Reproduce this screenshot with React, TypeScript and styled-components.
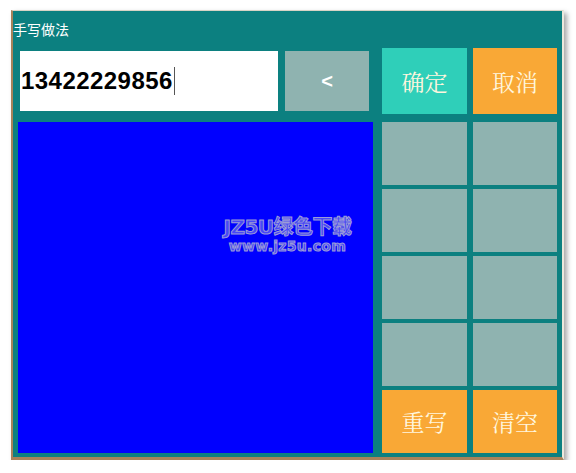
import styled, { createGlobalStyle } from "styled-components";

const GlobalStyle = createGlobalStyle`
  html, body {
    margin: 0;
    padding: 0;
    background: #ffffff;
  }
  body {
    font-family: "Liberation Sans", Arial, "Noto Sans CJK SC", sans-serif;
  }
`;

const SWindow = styled.div`
  margin: 10px 0 0 11px;
  width: 553px;
  box-sizing: border-box;
  background-color: #0c8080;
  border-left: 2px solid #a8825a;
  border-bottom: 3px solid #a8825a;
  border-top: 1px solid #d9d4c6;
  border-right: 2px solid #ece8dc;
  box-shadow: 3px 3px 5px rgba(0, 0, 0, 0.35);
  padding: 0 5px 4px 5px;
`;

const STitle = styled.div`
  height: 37px;
  margin-left: -5px;
  padding-top: 10px;
  box-sizing: border-box;
  color: #ffffff;
  font-family: "Noto Sans CJK SC", sans-serif;
  font-size: 14px;
  line-height: 16px;
`;

const SBody = styled.div`
  display: flex;
  gap: 9px;
`;

const SLeft = styled.div`
  width: 355px;
  display: flex;
  flex-direction: column;
  gap: 8px;
`;

const SInputBar = styled.div`
  height: 66px;
  box-sizing: border-box;
  padding: 3px 4px 3px 2px;
  display: flex;
  gap: 7px;
`;

const SInput = styled.div`
  width: 258px;
  background: #ffffff;
  display: flex;
  align-items: center;
  padding-left: 1px;
  box-sizing: border-box;
  font-family: "Liberation Sans", Arial, sans-serif;
  font-weight: bold;
  font-size: 24px;
  letter-spacing: 0.45px;
  color: #000000;
`;

const SCaret = styled.span`
  display: inline-block;
  width: 1px;
  height: 28px;
  margin-left: 1px;
  background: #555555;
`;

const SKey = styled.button<{ $tone?: "gray" | "green" | "orange" }>`
  border: none;
  margin: 0;
  padding: 0;
  cursor: pointer;
  background-color: ${({ $tone }) =>
    $tone === "green" ? "#2fcfb9" : $tone === "orange" ? "#f9a836" : "#8fb3b0"};
  color: #fff6de;
  font-family: "Noto Serif CJK SC", "Noto Sans CJK SC", serif;
  font-size: 23px;
  display: flex;
  align-items: center;
  justify-content: center;
`;

const SBack = styled(SKey)`
  width: 84px;
  font-family: "Liberation Sans", Arial, sans-serif;
  font-weight: bold;
  font-size: 20px;
  color: #ffffff;
`;

const SCanvas = styled.div`
  position: relative;
  height: 331px;
  background: #0000ff;
`;

const SWatermark = styled.div`
  position: absolute;
  left: 204px;
  top: 95px;
  width: 131px;
  font-family: "DejaVu Sans", "Noto Sans CJK SC", sans-serif;
  font-weight: bold;
  color: #4848f6;
  -webkit-text-stroke: 1px #9c9cd8;
  text-align: center;
  line-height: 1;
  white-space: nowrap;
  div:first-child {
    font-size: 20px;
    letter-spacing: -0.5px;
  }
  div:last-child {
    font-size: 14px;
    letter-spacing: 0.3px;
    margin-top: 2px;
  }
`;

const SRight = styled.div`
  width: 175px;
  display: flex;
  flex-direction: column;
  gap: 8px;
`;

const SActions = styled.div`
  height: 66px;
  display: grid;
  grid-template-columns: 85px 84px;
  column-gap: 6px;
`;

const SPad = styled.div`
  display: grid;
  grid-template-columns: 85px 84px;
  grid-template-rows: repeat(5, 63px);
  gap: 4px 6px;
`;

const App = () => {
  return (
    <>
      <GlobalStyle />
      <SWindow>
        <STitle>手写做法</STitle>
        <SBody>
          <SLeft>
            <SInputBar>
              <SInput>
                13422229856
                <SCaret />
              </SInput>
              <SBack>&lt;</SBack>
            </SInputBar>
            <SCanvas>
              <SWatermark>
                <div>JZ5U绿色下载</div>
                <div>www.jz5u.com</div>
              </SWatermark>
            </SCanvas>
          </SLeft>
          <SRight>
            <SActions>
              <SKey $tone="green">确定</SKey>
              <SKey $tone="orange">取消</SKey>
            </SActions>
            <SPad>
              {Array.from({ length: 8 }).map((_, i) => (
                <SKey key={i} />
              ))}
              <SKey $tone="orange">重写</SKey>
              <SKey $tone="orange">清空</SKey>
            </SPad>
          </SRight>
        </SBody>
      </SWindow>
    </>
  );
};

export default App;
